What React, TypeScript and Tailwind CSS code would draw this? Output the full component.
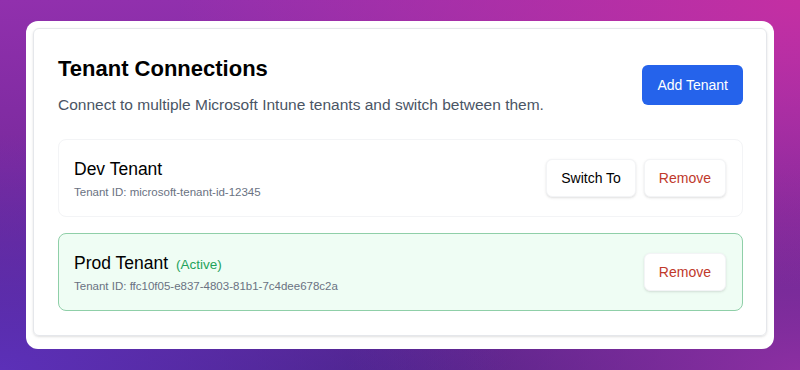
import React from "react"

const tenants = [
  { name: "Dev Tenant", id: "microsoft-tenant-id-12345", active: false },
  { name: "Prod Tenant", id: "ffc10f05-e837-4803-81b1-7c4dee678c2a", active: true },
]

export default function App() {
  return (
    <div className="w-[800px] h-[370px] overflow-hidden pt-[21px] px-[26px] font-['Liberation_Sans',Arial,sans-serif] bg-[radial-gradient(ellipse_at_100%_0%,#c42fa3_0%,rgba(196,47,163,0)_55%),radial-gradient(ellipse_at_0%_100%,#5c30b8_0%,rgba(92,48,184,0)_45%),radial-gradient(ellipse_at_100%_100%,#8c2fa2_0%,rgba(140,47,162,0)_40%),linear-gradient(180deg,#9130ad_0%,#7a2a9e_45%,#4c2284_100%)]">
      <div className="bg-white rounded-xl p-[7px] h-[328px]">
        <div className="border border-gray-200 rounded-md shadow-sm pt-6 pb-6 pl-6 pr-[23px] h-[308px]">
          {/* Header */}
          <div className="flex items-center justify-between mb-[22px]">
            <div>
              <h1 className="text-[22px] font-bold text-black leading-8">Tenant Connections</h1>
              <p className="mt-2 text-[15.5px] leading-6 text-gray-600">
                Connect to multiple Microsoft Intune tenants and switch between them.
              </p>
            </div>
            <button className="shrink-0 whitespace-nowrap bg-[#2563eb] text-white text-sm leading-5 px-[15px] py-2.5 rounded-md">
              Add Tenant
            </button>
          </div>

          {/* Tenant list */}
          <div className="space-y-4">
            {tenants.map((t) => (
              <div
                key={t.id}
                className={
                  t.active
                    ? "flex items-center justify-between py-4 pl-[15px] pr-4 rounded-lg border border-[#8fcfa8] bg-[#effdf4]"
                    : "flex items-center justify-between py-4 pl-[15px] pr-4 rounded-lg border border-gray-100 bg-white"
                }
              >
                <div>
                  <div className="flex items-baseline gap-2">
                    <span className="text-[17.5px] leading-[27px] text-black">{t.name}</span>
                    {t.active && <span className="text-[13.5px] text-[#1fa35a]">(Active)</span>}
                  </div>
                  <div className="mt-px text-[11.5px] leading-4 text-gray-500">Tenant ID: {t.id}</div>
                </div>
                <div className="flex gap-2 shrink-0">
                  {!t.active && (
                    <button className="whitespace-nowrap bg-white border border-gray-100 shadow-sm rounded-md px-[14px] h-[38px] text-sm text-black">
                      Switch To
                    </button>
                  )}
                  <button className="whitespace-nowrap bg-white border border-gray-100 shadow-sm rounded-md px-[14px] h-[38px] text-sm text-[#c0392b]">
                    Remove
                  </button>
                </div>
              </div>
            ))}
          </div>
        </div>
      </div>
    </div>
  )
}
